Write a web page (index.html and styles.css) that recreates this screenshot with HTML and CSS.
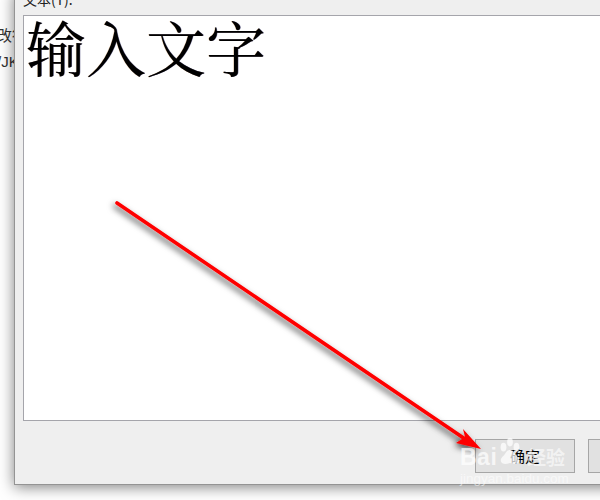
FILE: index.html
```html
<!DOCTYPE html>
<html lang="zh">
<head>
<meta charset="utf-8">
<title>输入文字</title>
<link rel="stylesheet" href="styles.css">
</head>
<body>
<div class="backdrop">
  <div class="back-line first">改行</div>
  <div class="back-line">/JK</div>
</div>
<section class="dialog">
  <div class="label">文本(T):</div>
  <div class="textbox">输入文字</div>
  <div class="actions">
    <div class="button">确定</div>
    <div class="button"></div>
  </div>
</section>
<svg class="arrow" viewBox="0 0 600 500" aria-hidden="true">
  <defs>
    <filter id="shadow" x="-10%" y="-10%" width="120%" height="120%">
      <feDropShadow dx="-2" dy="3" stdDeviation="3" flood-color="#000" flood-opacity="0.7"/>
    </filter>
  </defs>
  <g filter="url(#shadow)">
    <path d="M117 203 L468 441" stroke="#fe0000" stroke-width="3.6" stroke-linecap="round" fill="none"/>
    <path d="M481 449 L456 443 L465 437 L463 429 Z" fill="#fe0000"/>
  </g>
</svg>
<div class="watermark">
  <div class="wm-brand">
    <span class="wm-bai">Bai</span>
    <svg class="wm-paw" viewBox="0 0 36 38" aria-hidden="true">
      <ellipse cx="9" cy="13" rx="4" ry="6"/>
      <ellipse cx="18" cy="6" rx="4" ry="6"/>
      <ellipse cx="27" cy="13" rx="4" ry="6"/>
      <path d="M18 17c-5 0-6 5-9 8-3 3-5 5-3 9 2 3 6 3 12 1 6 2 10 2 12-1 2-4 0-6-3-9-3-3-4-8-9-8z"/>
    </svg>
    <span class="wm-cn">经验</span>
  </div>
  <div class="wm-url">jingyan.baidu.com</div>
</div>
</body>
</html>
```
FILE: styles.css
```css
html, body {
  margin: 0;
  height: 100%;
}
body {
  position: relative;
  width: 600px;
  height: 500px;
  overflow: hidden;
  background: #ffffff;
  font-family: "Liberation Sans", "Noto Sans CJK SC", sans-serif;
}
.backdrop {
  padding-top: 23px;
  font-size: 15px;
  color: #333333;
}
.back-line {
  height: 26px;
  line-height: 26px;
  white-space: nowrap;
  margin-left: -3px;
}
.dialog {
  position: absolute;
  left: 14px;
  top: -10px;
  width: 640px;
  height: 495px;
  box-sizing: border-box;
  border: 1px solid #949494;
  border-width: 0 0 1px 1px;
  background: #efefef;
  box-shadow: 0 2px 14px rgba(0, 0, 0, 0.5);
  padding: 0 0 0 8px;
  display: flex;
  flex-direction: column;
}
.label {
  height: 25px;
  line-height: 18px;
  font-size: 14px;
  color: #222222;
  font-family: "Noto Sans CJK SC", sans-serif;
}
.textbox {
  box-sizing: border-box;
  height: 406px;
  border: 1px solid #a5a5ab;
  background: #ffffff;
  padding: 0 0 0 2px;
  font-family: "Noto Serif CJK SC", "AR PL UMing CN", "Noto Sans CJK SC", serif;
  font-size: 60px;
  line-height: 60px;
  color: #000000;
  white-space: nowrap;
  text-shadow: 0.6px 0 0 rgba(0, 0, 70, 0.55), -0.4px 0 0 rgba(190, 110, 20, 0.35);
}
.actions {
  display: flex;
  gap: 13px;
  margin-top: 18px;
  margin-left: 452px;
}
.button {
  box-sizing: border-box;
  width: 100px;
  height: 34px;
  flex: none;
  border: 1px solid #a6a6a6;
  background: #e1e1e1;
  text-align: center;
  font-size: 15px;
  line-height: 32px;
  color: #000000;
  font-family: "Noto Sans CJK SC", sans-serif;
}
.arrow {
  position: absolute;
  left: 0;
  top: 0;
  width: 600px;
  height: 500px;
}
.watermark {
  position: absolute;
  left: 460px;
  top: 434px;
  width: 110px;
  white-space: nowrap;
}
.wm-brand {
  display: flex;
  align-items: flex-end;
  height: 35px;
}
.wm-bai {
  font-size: 23px;
  line-height: 23px;
  font-weight: 700;
  width: 37px;
  flex: none;
  letter-spacing: 0.5px;
  color: rgba(255, 255, 255, 0.72);
}
.wm-paw {
  width: 26px;
  height: 35px;
  flex: none;
  fill: rgba(255, 255, 255, 0.72);
}
.wm-cn {
  font-size: 19px;
  line-height: 24px;
  font-weight: 700;
  font-family: "Noto Sans CJK SC", sans-serif;
  margin-left: 4px;
  color: rgba(255, 255, 255, 0.6);
}
.wm-url {
  font-size: 13.5px;
  line-height: 14px;
  margin-top: 3px;
  color: rgba(255, 255, 255, 0.55);
}
```
